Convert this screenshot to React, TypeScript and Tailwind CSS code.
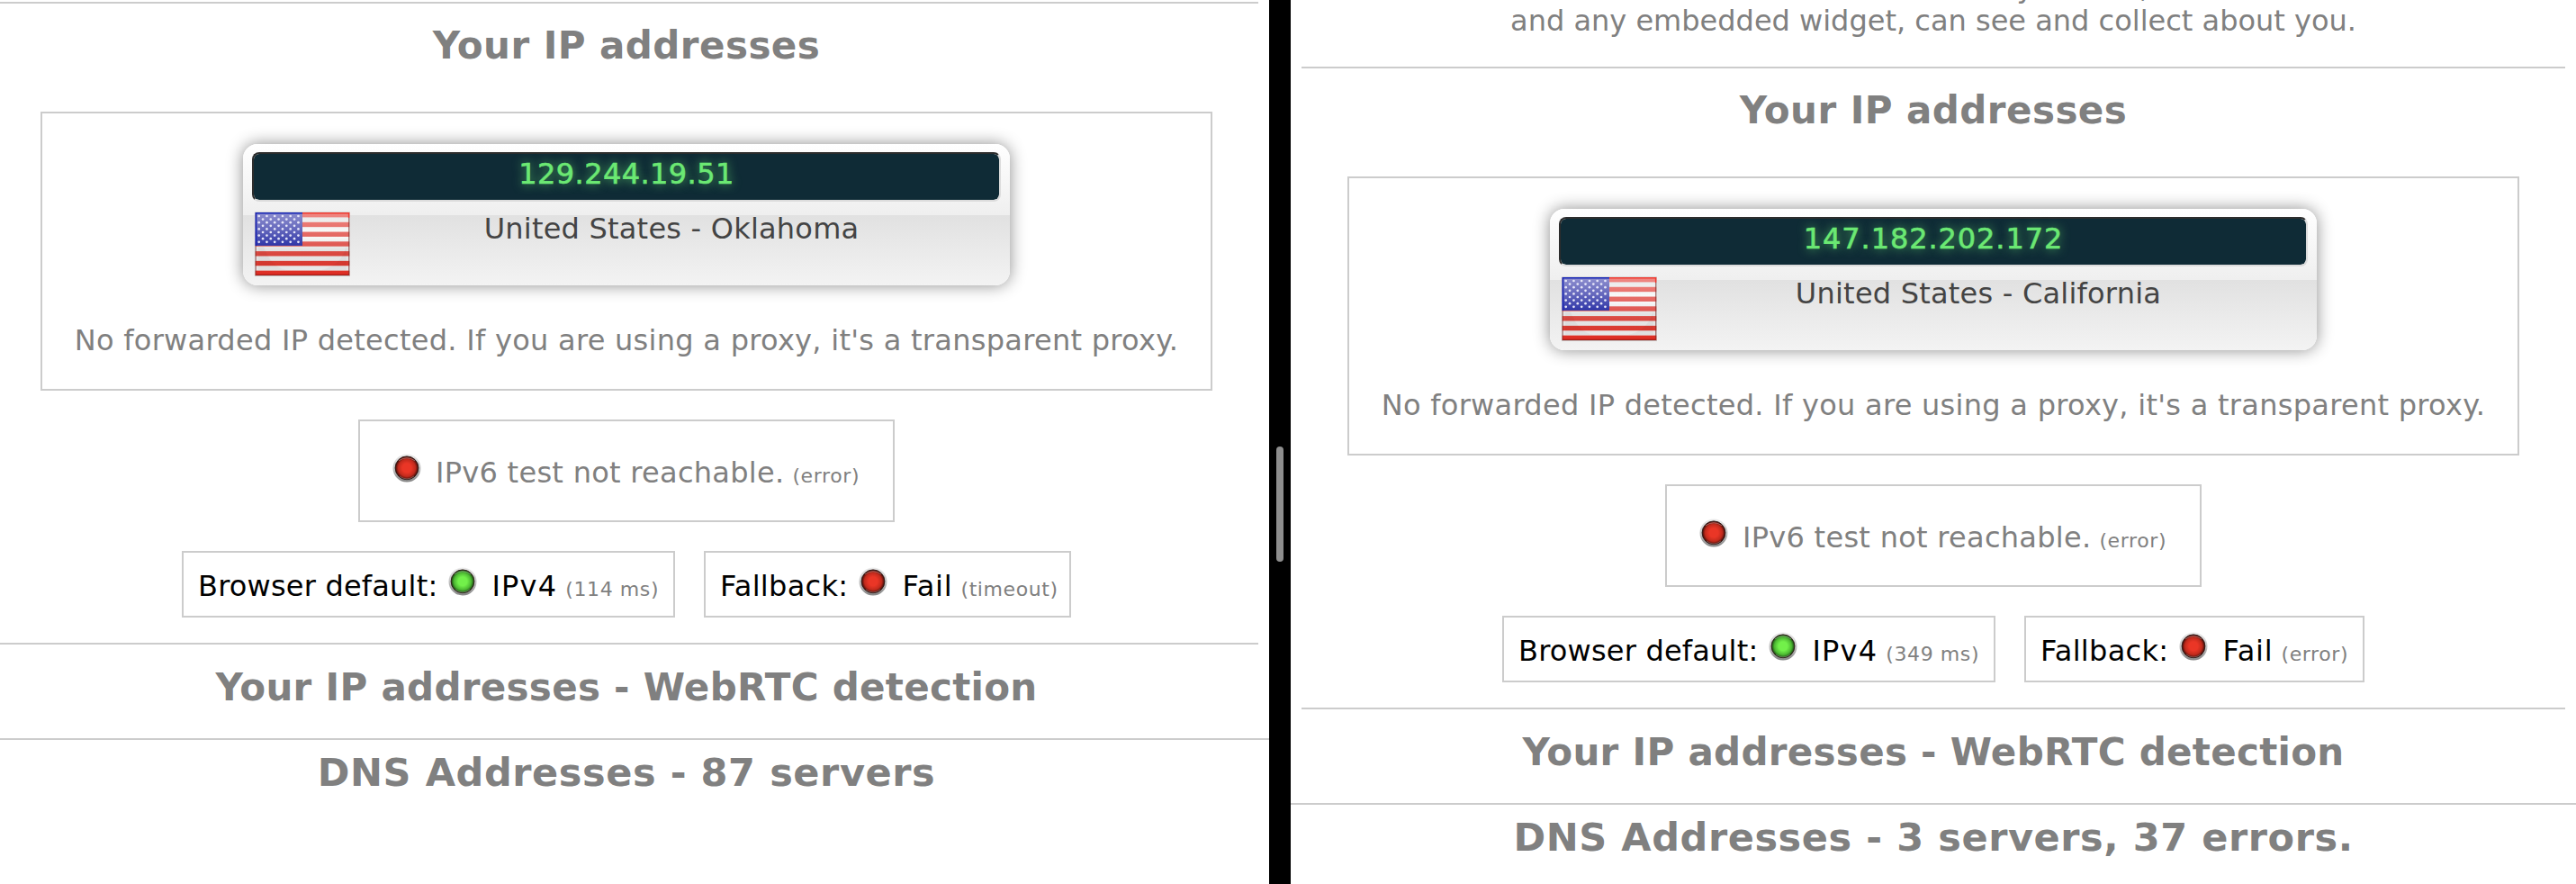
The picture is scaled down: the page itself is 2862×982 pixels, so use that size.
import type { ReactNode } from 'react';

type Tone = 'red' | 'green';

const TONES: Record<Tone, [string, string, string]> = {
  red: ['#ea3626', '#c02a1c', '#3c0a06'],
  green: ['#72f04a', '#4cb832', '#173f10'],
};

function Led({ tone }: { tone: Tone }) {
  const [core, mid, edge] = TONES[tone];
  return (
    <svg className="block h-8 w-8 shrink-0" viewBox="0 0 32 32">
      <defs>
        <radialGradient id={`led-${tone}`} cx="0.5" cy="0.5" r="0.5">
          <stop offset="0" stopColor={core} />
          <stop offset="0.38" stopColor={core} />
          <stop offset="0.74" stopColor={mid} />
          <stop offset="1" stopColor={edge} />
        </radialGradient>
        <linearGradient id={`rim-${tone}`} x1="0" y1="0" x2="0" y2="1">
          <stop offset="0" stopColor="#ececec" />
          <stop offset="0.5" stopColor="#c4c4c4" />
          <stop offset="1" stopColor="#858585" />
        </linearGradient>
      </defs>
      <circle cx="16" cy="16" r="15.5" fill={`url(#rim-${tone})`} />
      <circle cx="16" cy="15.8" r="12.9" fill={`url(#led-${tone})`} stroke="#2a1512" strokeWidth="0.9" />
      <path d="M7 7.8 Q16 1.6 25 7.8" fill="none" stroke="#fff" strokeOpacity="0.3" strokeWidth="1" />
      <path d="M8 25 Q16 31 24 25" fill="none" stroke="#fff" strokeOpacity="0.25" strokeWidth="1" />
    </svg>
  );
}

const STRIPE = 70 / 13;
const STRIPES = [0, 2, 4, 6, 8, 10, 12];
const STARS = Array.from({ length: 9 }, (_, row) =>
  Array.from({ length: row % 2 ? 5 : 6 }, (_, col) => ({
    x: 4.7 + col * 8.75 + (row % 2 ? 4.35 : 0),
    y: 5 + row * 3.6,
  })),
).flat();

function Flag() {
  return (
    <svg className="block h-[72px] w-[106px] shrink-0" viewBox="0 0 106 72">
      <defs>
        <linearGradient id="stripe" x1="0" y1="0" x2="0" y2="72" gradientUnits="userSpaceOnUse">
          <stop offset="0" stopColor="#f08a85" />
          <stop offset="0.45" stopColor="#e2605b" />
          <stop offset="0.7" stopColor="#d8433a" />
          <stop offset="1" stopColor="#e02a20" />
        </linearGradient>
        <linearGradient id="canton" x1="0" y1="0" x2="0" y2="1">
          <stop offset="0" stopColor="#8f90cf" />
          <stop offset="0.5" stopColor="#6669bd" />
          <stop offset="1" stopColor="#2f36a8" />
        </linearGradient>
        <linearGradient id="cloth" x1="0" y1="0" x2="0" y2="1">
          <stop offset="0" stopColor="#e6e6e6" />
          <stop offset="0.35" stopColor="#fbfbfb" />
          <stop offset="0.6" stopColor="#e2e2e2" />
          <stop offset="1" stopColor="#e9e9e9" />
        </linearGradient>
      </defs>
      <rect x="0" y="0.5" width="106" height="71.5" fill="#8a8a8a" fillOpacity="0.45" />
      <rect x="0.7" y="1" width="104.6" height="70" fill="url(#cloth)" />
      {STRIPES.map((n) => (
        <rect key={n} x="0.7" y={1 + n * STRIPE} width="104.6" height={STRIPE} fill="url(#stripe)" />
      ))}
      <path d="M10 39 Q18 62 36 65 H74 Q96 60 102 38 V65 H4 V39Z" fill="#000" fillOpacity="0.03" />
      <path d="M1 1.7 H105" stroke="#ef3a30" strokeWidth="1.6" />
      <path d="M104.6 1 V7" stroke="#ef3a30" strokeWidth="1.4" />
      <path d="M104.6 7 V71 M1.2 38 V71" stroke="#7d2a26" strokeOpacity="0.6" strokeWidth="1.2" />
      <path d="M1 70.4 H105" stroke="#a81f18" strokeWidth="1.4" />
      <rect x="0.7" y="1" width="52.3" height="36.9" fill="url(#canton)" />
      <path d="M1.4 37.9 V1.7 H53" fill="none" stroke="#1423b4" strokeWidth="1.5" />
      {STARS.map((s, i) => (
        <circle key={i} cx={s.x} cy={s.y} r="1.35" fill="#e6e6f8" />
      ))}
    </svg>
  );
}

function Heading({ children, className }: { children: ReactNode; className: string }) {
  return (
    <h2 className={`text-center leading-[50px] font-bold whitespace-nowrap text-[#808080] ${className}`}>{children}</h2>
  );
}

function IpCard({ ip, place, ipClass }: { ip: string; place: string; ipClass: string }) {
  return (
    <div className="mx-auto mt-[34px] h-[157px] w-[852px] rounded-2xl bg-[linear-gradient(to_bottom,#ffffff_0%,#efefef_50%,#e1e1e1_50.5%,#f3f3f3_100%)] px-[10px] pt-[9px] shadow-[0_0_18px_rgba(0,0,0,0.45)]">
      <div className="h-[55px] rounded-lg border-2 border-t-[#2d2d2d] border-r-[#dcdcdc] border-b-[#dcdcdc] border-l-[#2d2d2d] bg-[#0f2b36] bg-clip-padding">
        <p
          className={`mt-[3px] text-center leading-[39px] text-[#6be873] [-webkit-text-stroke:0.6px_#6be873] [text-shadow:0_0_12px_rgba(107,232,115,0.8)] ${ipClass}`}
        >
          {ip}
        </p>
      </div>
      <div className="mt-[11px] ml-[3px] flex">
        <Flag />
        <p className="w-[714px] text-center tracking-[0.22px] text-[#444444]">{place}</p>
      </div>
    </div>
  );
}

function Note({ children }: { children: ReactNode }) {
  return <span className="ml-[9px] text-[22px] tracking-[0.6px] text-[#808080]">{children}</span>;
}

type PaneData = {
  ip: string;
  ipClass: string;
  place: string;
  latency: string;
  fallback: string;
  fallbackBox: string;
  dns: string;
};

function Results({ data, rule }: { data: PaneData; rule: string }) {
  return (
    <>
      <div className={rule}>
        <div className="h-[2px] bg-[#cccccc]" />
        <Heading className="mt-[22px] text-[42px] tracking-[0.45px]">Your IP addresses</Heading>
        <div className="mx-auto mt-[48px] h-[310px] w-[1302px] border-2 border-[#cccccc]">
          <IpCard ip={data.ip} place={data.place} ipClass={data.ipClass} />
          <p className="mt-[42px] text-center tracking-[0.28px] whitespace-nowrap">
            No forwarded IP detected. If you are using a proxy, it's a transparent proxy.
          </p>
        </div>
        <div className="mx-auto mt-[32px] flex h-[114px] w-[596px] items-baseline border-2 border-[#cccccc] pt-[36px] pl-[36px] whitespace-nowrap">
          <Led tone="red" />
          <span className="ml-[16px] tracking-[0.28px]">IPv6 test not reachable.</span>
          <Note>(error)</Note>
        </div>
        <div className="mt-[32px] flex justify-center gap-[32px] whitespace-nowrap text-black">
          <div className="flex h-[74px] w-[548px] items-baseline border-2 border-[#cccccc] pt-[16px] pl-[16px]">
            <span className="tracking-[0.2px]">Browser default:</span>
            <span className="ml-[12px]">
              <Led tone="green" />
            </span>
            <span className="ml-[16px] tracking-[1.2px]">IPv4</span>
            <Note>{data.latency}</Note>
          </div>
          <div className={`flex h-[74px] items-baseline border-2 border-[#cccccc] pt-[16px] pl-[16px] ${data.fallbackBox}`}>
            <span className="tracking-[0.3px]">Fallback:</span>
            <span className="ml-[12px]">
              <Led tone="red" />
            </span>
            <span className="ml-[16px] tracking-[0.8px]">Fail</span>
            <Note>{data.fallback}</Note>
          </div>
        </div>
        <div className="mt-[28px] h-[2px] bg-[#cccccc]" />
        <Heading className="mt-[23px] text-[42px] tracking-[0.29px]">Your IP addresses - WebRTC detection</Heading>
      </div>
      <div className="mt-[31px] h-[2px] bg-[#cccccc]" />
      <div className={rule}>
        <Heading className="mt-[11px] text-[43px] tracking-[0.58px]">{data.dns}</Heading>
      </div>
    </>
  );
}

const LEFT: PaneData = {
  ip: '129.244.19.51',
  ipClass: 'tracking-[0.4px]',
  place: 'United States - Oklahoma',
  latency: '(114 ms)',
  fallback: '(timeout)',
  fallbackBox: 'w-[408px]',
  dns: 'DNS Addresses - 87 servers',
};

const RIGHT: PaneData = {
  ip: '147.182.202.172',
  ipClass: 'tracking-[0.9px]',
  place: 'United States - California',
  latency: '(349 ms)',
  fallback: '(error)',
  fallbackBox: 'w-[378px]',
  dns: 'DNS Addresses - 3 servers, 37 errors.',
};

export default function App() {
  return (
    <div className="flex h-[982px] w-[2862px] overflow-hidden bg-white text-[32px] leading-[39px] text-[#808080] font-['DejaVu_Sans',sans-serif]">
      <section className="w-[1410px] overflow-hidden pt-[2px]">
        <Results data={LEFT} rule="-ml-[6px] w-[1404px]" />
      </section>
      <div className="flex w-6 items-start justify-center bg-black">
        <div className="mt-[496px] h-32 w-2 rounded-full bg-[#8e8e8e]" />
      </div>
      <section className="h-[982px] w-[1428px] overflow-hidden">
        <div className="-mt-[33px] mb-[31px] ml-3 h-[76px] w-[1404px] text-center whitespace-nowrap">
          <p className="h-[37px] pr-[114px] tracking-[0.2px]">
            This is the kind of information that all the sites you visit, as well as their ads
          </p>
          <p>and any embedded widget, can see and collect about you.</p>
        </div>
        <Results data={RIGHT} rule="ml-3 w-[1404px]" />
      </section>
    </div>
  );
}
